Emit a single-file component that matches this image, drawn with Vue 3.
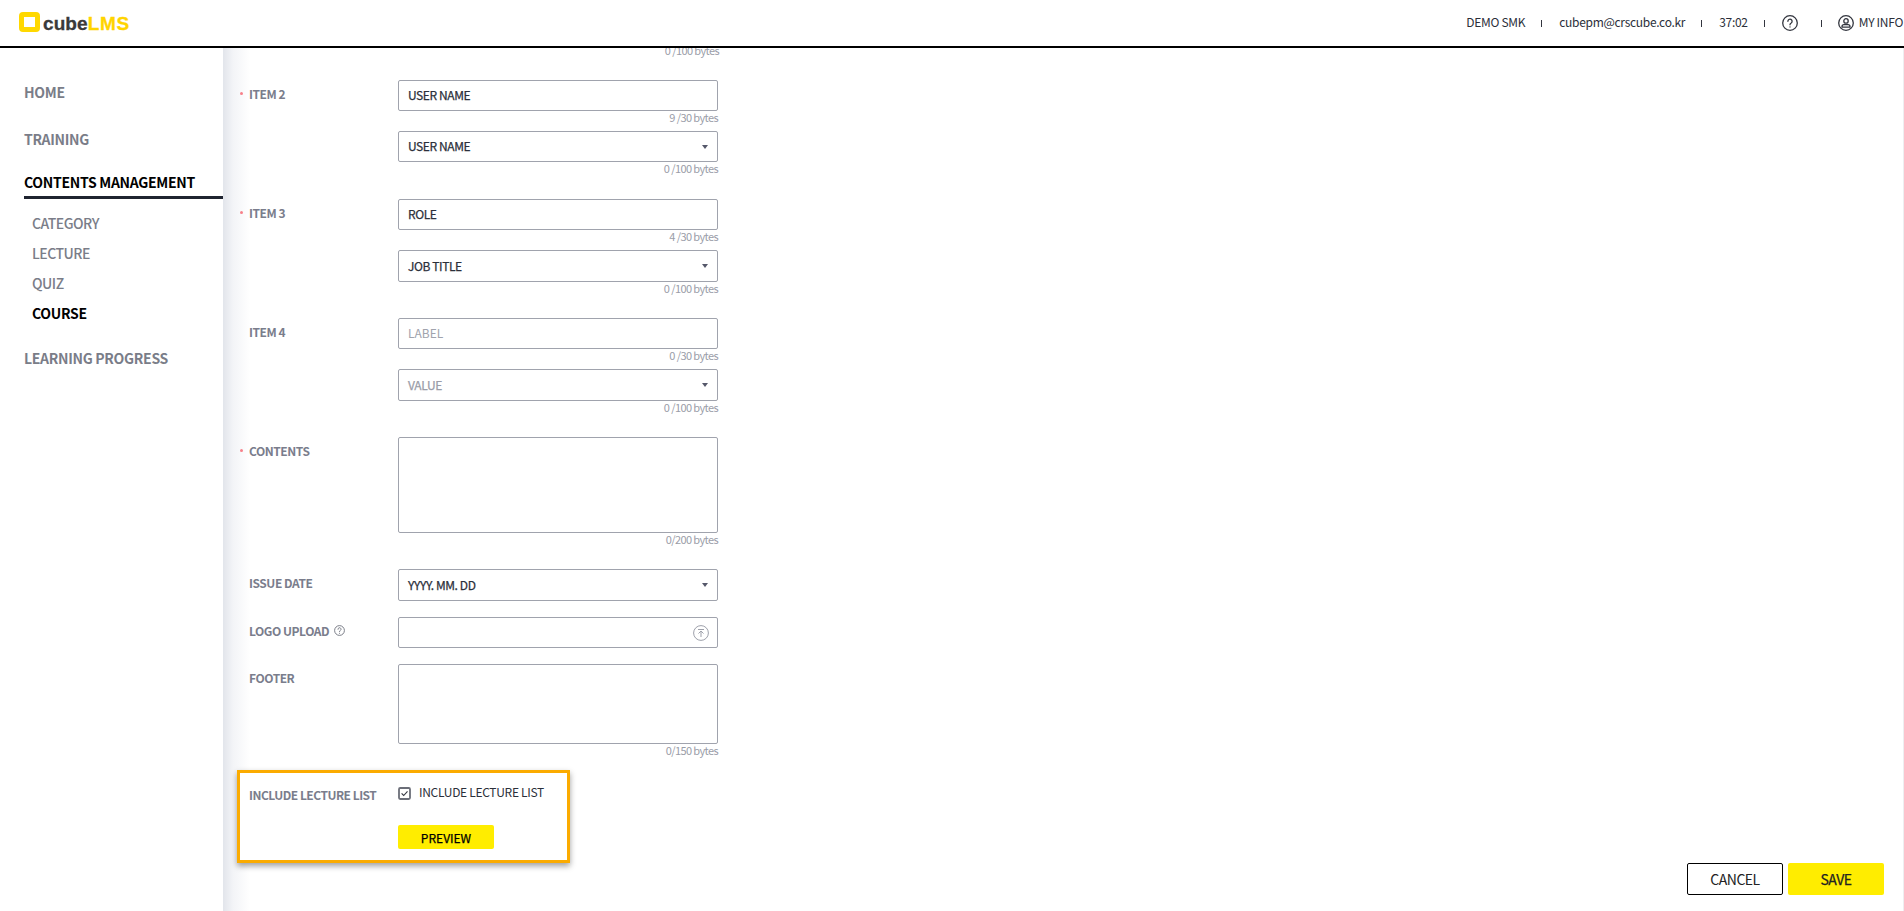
<script setup>
const menuSub = [
  { name: 'CATEGORY' },
  { name: 'LECTURE' },
  { name: 'QUIZ' },
  { name: 'COURSE', active: true },
]
const items = [
  { label: 'ITEM 2', req: true, input: 'USER NAME', count: '9 /30 bytes', select: 'USER NAME', selCount: '0 /100 bytes' },
  { label: 'ITEM 3', req: true, input: 'ROLE', count: '4 /30 bytes', select: 'JOB TITLE', selCount: '0 /100 bytes', tall: true },
  { label: 'ITEM 4', req: false, placeholder: 'LABEL', count: '0 /30 bytes', selectPh: 'VALUE', selCount: '0 /100 bytes', tall: true },
]
</script>

<template>
  <div class="page">
    <header class="topbar">
      <div class="logo">
        <span class="logo-mark"></span>
        <span class="logo-cube">cube</span><span class="logo-lms">LMS</span>
      </div>
      <div class="util">
        <span class="util-text">DEMO SMK</span>
        <i class="sep"></i>
        <span class="util-text">cubepm@crscube.co.kr</span>
        <i class="sep"></i>
        <span class="util-text">37:02</span>
        <i class="sep"></i>
        <svg class="ico16" viewBox="0 0 16 16" fill="none" stroke="#33363f" stroke-width="1.3">
          <circle cx="8" cy="8" r="7.3" />
          <path d="M5.9 6.3a2.1 2.1 0 1 1 3.3 1.700c-.8.5-1.200.9-1.200 1.800" stroke-linecap="round" />
          <circle cx="8" cy="11.900" r=".7" fill="#33363f" stroke="none" />
        </svg>
        <i class="sep sep-wide"></i>
        <span class="myinfo">
          <svg class="ico16" viewBox="0 0 16 16" fill="none" stroke="#33363f" stroke-width="1.3">
            <circle cx="8" cy="8" r="7.3" />
            <circle cx="8" cy="5.900" r="2.200" />
            <path d="M4 12.200v-.6c0-1.200.9-1.900 2-1.900h4c1.100 0 2 .7 2 1.900v.6z" />
          </svg>
          <span class="util-text">MY INFO</span>
        </span>
      </div>
    </header>

    <div class="body">
      <nav class="side">
        <a class="m1 m-home">HOME</a>
        <a class="m1 m-training">TRAINING</a>
        <a class="m1 m-active">CONTENTS MANAGEMENT</a>
        <div class="sub">
          <a v-for="s in menuSub" :key="s.name" class="m2" :class="{ on: s.active }">{{ s.name }}</a>
        </div>
        <a class="m1 m-progress">LEARNING PROGRESS</a>
      </nav>

      <main class="main">
        <div class="form">
          <div class="counter first-counter">0 /100 bytes</div>

          <section v-for="it in items" :key="it.label" class="row row-item">
            <div class="label"><i class="dot" :class="{ on: it.req }"></i>{{ it.label }}</div>
            <div class="field">
              <div class="box" :class="{ ph: it.placeholder }">{{ it.input || it.placeholder }}</div>
              <div class="counter">{{ it.count }}</div>
              <div class="box sel" :class="{ tall: it.tall, 'ph-b': it.selectPh }">
                {{ it.select || it.selectPh }}<i class="caret"></i>
              </div>
              <div class="counter">{{ it.selCount }}</div>
            </div>
          </section>

          <section class="row row-plain">
            <div class="label"><i class="dot on"></i>CONTENTS</div>
            <div class="field">
              <div class="area area-contents"></div>
              <div class="counter">0/200 bytes</div>
            </div>
          </section>

          <section class="row row-plain">
            <div class="label"><i class="dot"></i>ISSUE DATE</div>
            <div class="field">
              <div class="box sel tall">YYYY. MM. DD<i class="caret"></i></div>
            </div>
          </section>

          <section class="row row-plain">
            <div class="label">
              <i class="dot"></i>LOGO UPLOAD
              <svg class="ico-help" viewBox="0 0 11 11" fill="none" stroke="#6d707c" stroke-width=".9">
                <circle cx="5.500" cy="5.500" r="4.900" />
                <path d="M4 4.300a1.500 1.500 0 1 1 2.300 1.200c-.5.3-.8.6-.8 1.200" stroke-linecap="round" />
                <circle cx="5.500" cy="8.200" r=".5" fill="#6d707c" stroke="none" />
              </svg>
            </div>
            <div class="field">
              <div class="box upload">
                <svg class="ico-upload" viewBox="0 0 16 16" fill="none" stroke="#9ea1ab" stroke-width="1">
                  <circle cx="8" cy="8" r="7.400" />
                  <path d="M5 4.500h6M8 12V6.200M5.500 8.500 8 6l2.500 2.500" />
                </svg>
              </div>
            </div>
          </section>

          <section class="row row-footer">
            <div class="label"><i class="dot"></i>FOOTER</div>
            <div class="field">
              <div class="area area-footer"></div>
              <div class="counter">0/150 bytes</div>
            </div>
          </section>

          <section class="callout">
            <div class="callout-label">INCLUDE LECTURE LIST</div>
            <div class="callout-body">
              <label class="check">
                <svg class="ico-check" viewBox="0 0 13 13" fill="none">
                  <rect x="1" y="1" width="11" height="11" rx="1.200" stroke="#6b6e78" stroke-width="1.800" />
                  <path d="M3.600 6.300 5.700 8.500 9.500 4.300" stroke="#33363f" stroke-width="1.100" />
                </svg>
                <span>INCLUDE LECTURE LIST</span>
              </label>
              <button class="btn-preview" type="button">PREVIEW</button>
            </div>
          </section>
        </div>

        <div class="actions">
          <button class="btn btn-cancel" type="button">CANCEL</button>
          <button class="btn btn-save" type="button">SAVE</button>
        </div>
      </main>
    </div>
  </div>
</template>

<style>
html, body { margin: 0; padding: 0; background: #fff; overflow: hidden; }
</style>

<style scoped>
* { box-sizing: border-box; }
.page {
  width: 1904px;
  height: 911px;
  display: flex;
  flex-direction: column;
  overflow: hidden;
  font-family: "Noto Sans CJK KR", "Noto Sans", sans-serif;
  color: #2b2f3a;
}
.topbar {
  height: 48px;
  flex: none;
  border-bottom: 2px solid #000;
  display: flex;
  align-items: center;
  justify-content: space-between;
  padding: 0 1px 0 19px;
}
.logo { display: flex; align-items: flex-end; height: 20px; margin-top: -2px; font-family: "Liberation Sans", sans-serif; font-weight: 700; font-size: 19px; line-height: 16px; }
.logo-mark { width: 21px; height: 20px; border: 5px solid #ffd800; border-radius: 4px; margin-right: 3px; }
.logo-cube { color: #3a3a3a; letter-spacing: .1px; -webkit-text-stroke: .3px currentColor; }
.logo-lms { color: #ffd400; letter-spacing: .6px; -webkit-text-stroke: .3px currentColor; }
.util { display: flex; align-items: center; }
.util-text { font-size: 12px; line-height: 16px; color: #2b2f3a; margin-top: -2px; white-space: nowrap; letter-spacing: -.3px; }
.sep { width: 1px; height: 7px; background: #33363f; margin: 0 17px 0 16px; }
.sep-wide { margin: 0 16px 0 23px; }
.ico16 { width: 16px; height: 16px; display: block; }
.myinfo { display: flex; align-items: center; gap: 5px; }

.body { flex: 1; display: flex; min-height: 0; }
.side { width: 223px; flex: none; display: flex; flex-direction: column; background: #fff; }
.m1 { display: block; font-size: 14px; line-height: 22px; font-weight: 700; letter-spacing: -.3px; color: #7a7d88; padding-left: 24px; white-space: nowrap; }
.m-home { margin-top: 33px; }
.m-training { margin-top: 25px; }
.m-active { margin-top: 21px; color: #000; height: 27px; }
.sub { margin-left: 24px; border-top: 3px solid #1f2430; padding: 14px 0 0 8px; margin-top: -2px; }
.m2 { display: block; font-size: 14px; line-height: 20px; height: 30px; font-weight: 500; letter-spacing: -.5px; color: #7a7d88; }
.m2.on { color: #000; font-weight: 700; letter-spacing: -.3px; }
.m-progress { margin-top: 14px; }

.main {
  flex: 1;
  position: relative;
  overflow: hidden;
  background: linear-gradient(90deg, #e2e5eb 0, #f3f4f7 10px, #fff 27px);
  border-right: 1px solid #eeeef0;
}
.form { width: 496px; margin-top: -6px; }
.first-counter { margin-bottom: 18px; padding-top: 2px; }
.row { display: grid; grid-template-columns: 175px 320px; }
.row-item { margin-bottom: 16px; }
.row-item:first-of-type { margin-bottom: 17px; }
.row-plain { margin-bottom: 16px; }
.row-footer { margin-bottom: 6px; }
.label {
  display: flex;
  align-items: center;
  height: 26px;
  padding-left: 17px;
  font-size: 12px;
  font-weight: 700;
  letter-spacing: -.45px;
  color: #7a7d8c;
  white-space: nowrap;
}
.dot { width: 3px; height: 3px; border-radius: 50%; margin-right: 6px; flex: none; }
.dot.on { background: #f7808a; }
.field { display: flex; flex-direction: column; }
.box {
  height: 31px;
  border: 1px solid #a0a3ad;
  border-radius: 2px;
  background: #fff;
  padding: 0 9px 2px;
  display: flex;
  align-items: center;
  justify-content: space-between;
  font-size: 12px;
  font-weight: 400;
  letter-spacing: -.4px;
  -webkit-text-stroke: .25px currentColor;
  color: #2b2f3a;
}
.box.tall { height: 32px; }
.box.ph { color: #a0a3ad; -webkit-text-stroke: 0; letter-spacing: 0; }
.box.ph-b { color: #9a9da8; }
.caret { width: 0; height: 0; border-left: 3.500px solid transparent; border-right: 3.500px solid transparent; border-top: 4px solid #55586a; margin-top: 2px; }
.upload { justify-content: flex-end; padding: 0 8px; }
.ico-upload { width: 16px; height: 16px; display: block; }
.ico-help { width: 11px; height: 11px; margin-left: 5px; flex: none; }
.counter {
  height: 20px;
  line-height: 12px;
  text-align: right;
  font-size: 11px;
  letter-spacing: -.6px;
  color: #9a9da8;
  white-space: nowrap;
}
.area { border: 1px solid #a0a3ad; border-radius: 2px; background: #fff; }
.area-contents { height: 96px; }
.area-footer { height: 80px; }

.callout {
  margin-left: 14px;
  width: 333px;
  height: 93px;
  border: 3px solid #fbab00;
  background: #fff;
  box-shadow: 0 3px 6px rgba(0, 0, 0, .38);
  display: grid;
  grid-template-columns: 149px 1fr;
  padding-left: 9px;
}
.callout-label { font-size: 12px; font-weight: 700; letter-spacing: -.5px; color: #7a7d8c; margin-top: 13px; line-height: 18px; white-space: nowrap; }
.callout-body { display: flex; flex-direction: column; align-items: flex-start; }
.check { display: flex; align-items: center; height: 16px; margin-top: 10px; font-size: 12px; letter-spacing: -.3px; color: #2b2f3a; white-space: nowrap; }
.ico-check { width: 13px; height: 13px; margin-right: 8px; margin-top: 4px; flex: none; }
.btn-preview {
  margin-top: 26px;
  width: 96px;
  height: 24px;
  padding: 0;
  border: 0;
  border-radius: 2px;
  background: #ffed00;
  font-family: inherit;
  font-size: 12px;
  -webkit-text-stroke: .25px currentColor;
  color: #000;
}
.actions { position: absolute; right: 19px; bottom: 16px; display: flex; gap: 5px; }
.btn { width: 96px; height: 32px; padding: 0; border-radius: 2px; font-family: inherit; font-size: 14px; letter-spacing: -.5px; color: #222; }
.btn-cancel { background: #fff; border: 1px solid #000; }
.btn-save { background: #ffed00; border: 0; -webkit-text-stroke: .25px currentColor; }
</style>
